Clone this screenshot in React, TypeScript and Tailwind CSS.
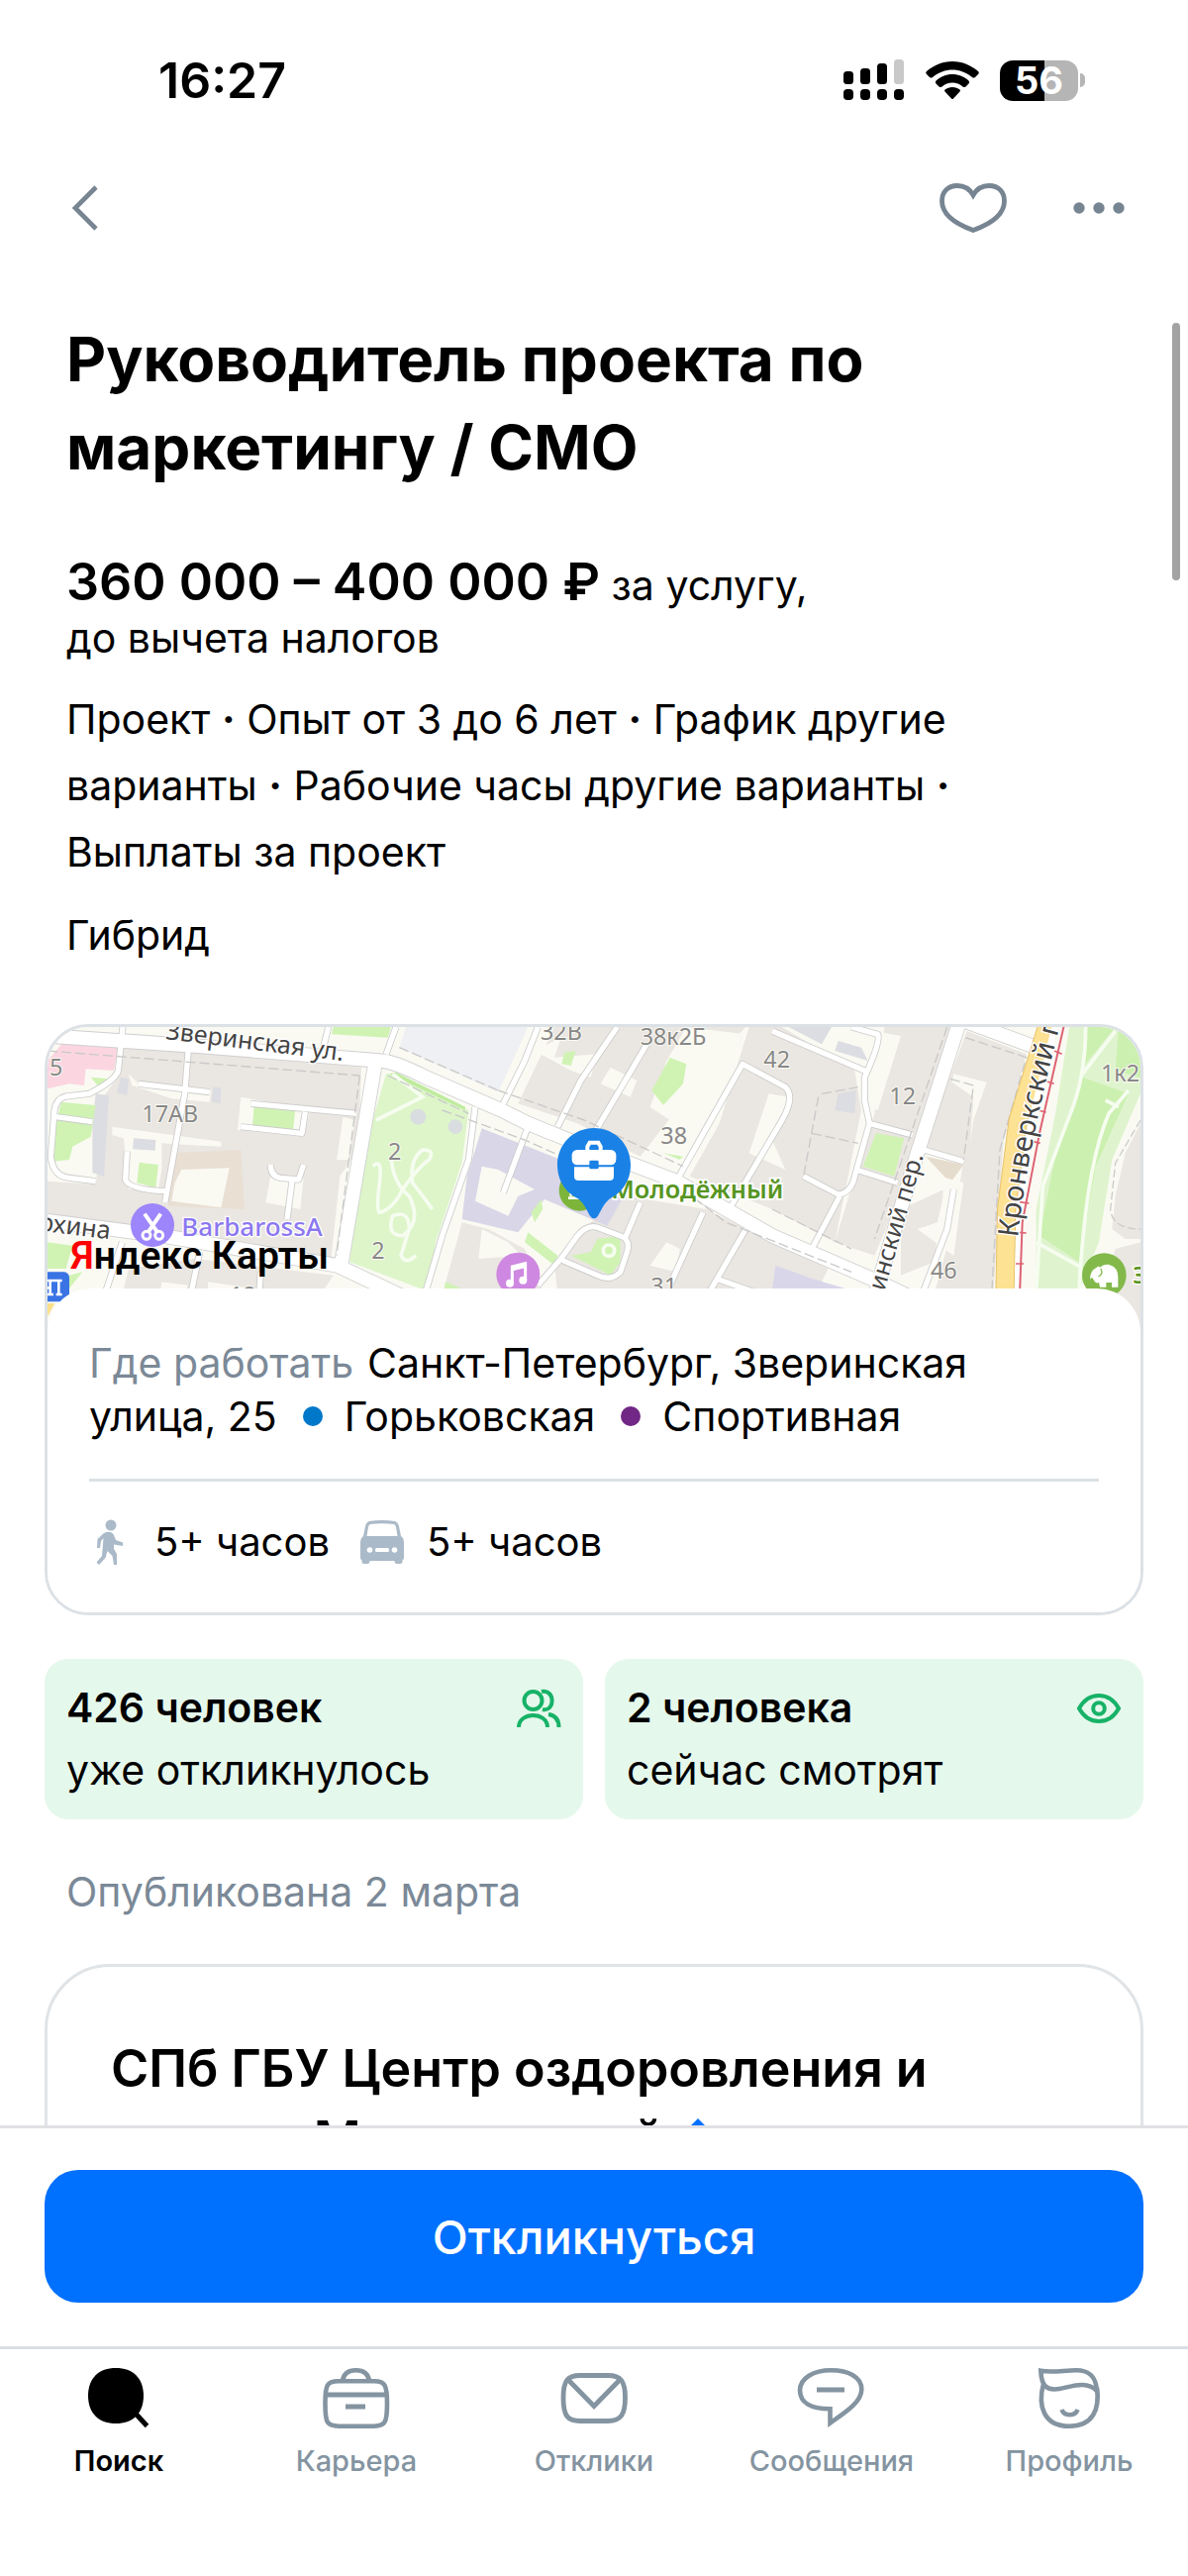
import React from "react";

const navItems = [
  { label: "Поиск", icon: <SearchIcon />, active: true },
  { label: "Карьера", icon: <BagIcon />, active: false },
  { label: "Отклики", icon: <MailIcon />, active: false },
  { label: "Сообщения", icon: <ChatIcon />, active: false },
  { label: "Профиль", icon: <FaceIcon />, active: false },
];

function SearchIcon() {
  return (
    <svg viewBox="0 0 72 64" className="h-16 w-[72px]" aria-hidden="true">
      <path d="M33 1C50 1 61 11 61 29S50 57 33 57 5 47 5 29 16 1 33 1Z" fill="currentColor" />
      <path d="M52 46L64.500 59.500" stroke="currentColor" strokeWidth="5" />
    </svg>
  );
}

function BagIcon() {
  return (
    <svg viewBox="0 0 72 64" className="h-16 w-[72px]" fill="none" stroke="currentColor" strokeWidth="4.600" aria-hidden="true">
      <path d="M22 14C23 7 28 3.300 35.500 3.300S48 7 49 14" />
      <path d="M4.500 37C4.500 18 6 14.300 18 14.300H54C65 14.300 67 18 67 37S65 59.700 54 59.700H18C6 59.700 4.500 56 4.500 37Z" />
      <path d="M5 28H67M25 40H45" strokeWidth="5" />
    </svg>
  );
}

function MailIcon() {
  return (
    <svg viewBox="0 0 72 64" className="h-16 w-[72px]" fill="none" stroke="currentColor" strokeWidth="4.800" aria-hidden="true">
      <path d="M5 31C5 14 9 8.500 22 8.500H50C63 8.500 67.500 14 67.500 31S63 54.500 50 54.500H22C9 54.500 5 49 5 31Z" />
      <path d="M10 13L36 39.500L62 13" />
    </svg>
  );
}

function ChatIcon() {
  return (
    <svg viewBox="0 0 72 64" className="h-16 w-[72px]" fill="none" stroke="currentColor" strokeWidth="4.600" aria-hidden="true">
      <path d="M34.500 42.300V56.500C48 47 66.300 36 66.300 22.500C66.300 10 53 3.300 35.500 3.300S4 11 4 23.500S15 42.300 34.500 42.300Z" />
      <path d="M21 23H49" strokeWidth="5" />
    </svg>
  );
}

function FaceIcon() {
  return (
    <svg viewBox="0 0 72 64" className="h-16 w-[72px]" fill="none" stroke="currentColor" strokeWidth="4.600" aria-hidden="true">
      <path d="M7.300 3.800C19 6 31 3.300 43 3.300C57 3.300 63 10 64 24C53 13 38 20 26 22C14 24 8 20 7.300 3.800Z" />
      <path d="M10 17C4 39 10 59.700 36 59.700C60 59.700 67 43 64 21" />
      <path d="M28.500 43C31 50 42 50 44.500 43" />
    </svg>
  );
}

function StatusBar() {
  return (
    <div className="flex items-center justify-between pt-[50px] pr-[104px] pl-[160px]">
      <time className="text-[50px] leading-[62px] font-semibold">16:27</time>
      <div className="flex items-center gap-[21px]">
        <svg viewBox="0 0 62 42" className="h-[42px] w-[62px]" aria-label="Сигнал">
          <rect x="0" y="12" width="10" height="13" rx="3.500" />
          <rect x="17" y="9" width="10" height="16" rx="3.500" />
          <rect x="34" y="4" width="10" height="21" rx="3.500" />
          <rect x="51" y="0" width="10" height="25" rx="3.500" fill="#c9c9c9" />
          <rect x="0" y="30" width="10" height="11" rx="4" />
          <rect x="17" y="30" width="10" height="11" rx="4" />
          <rect x="34" y="30" width="10" height="11" rx="4" />
          <rect x="51" y="30" width="10" height="11" rx="4" />
        </svg>
        <svg viewBox="0 0 54 40" className="h-10 w-[54px]" aria-label="Wi-Fi">
          <path d="M27 1C37 1 46 5 53 11Q54.500 12.500 53 14L50 17Q48.500 18 47 17C41 12 34 9.500 27 9.500S13 12 7 17Q5.500 18 4 17L1 14Q-.5 12.500 1 11C8 5 17 1 27 1Z" />
          <path d="M27 14C33.500 14 39 16.500 43.500 20.500Q45 22 43.500 23.500L40.500 26.500Q39 27.500 37.500 26.500C34.500 24 31 22.500 27 22.500S19.500 24 16.500 26.500Q15 27.500 13.500 26.500L10.500 23.500Q9 22 10.500 20.500C15 16.500 20.500 14 27 14Z" />
          <path d="M27 27C30 27 32.500 28 34.500 29.500Q35.500 30.500 34.500 31.500L28 38.500Q27 39.500 26 38.500L19.500 31.500Q18.500 30.500 19.500 29.500C21.500 28 24 27 27 27Z" />
        </svg>
        <div className="flex items-center gap-[2px]">
          <div className="flex h-[41px] w-[79px] items-center justify-center rounded-[13px] bg-linear-to-r from-black from-57% to-[#b5b5b5] to-57% text-[38px] leading-none font-bold text-white">
            56
          </div>
          <div className="h-[14px] w-[5px] rounded-r-full bg-[#b5b5b5]" />
        </div>
      </div>
    </div>
  );
}

function AppBar() {
  return (
    <div className="flex items-center justify-between pt-[58px] pr-[60px] pl-[66px] text-[#778592]">
      <button type="button" aria-label="Назад">
        <svg viewBox="0 0 40 80" className="h-20 w-10" fill="none" stroke="currentColor" strokeWidth="4.600" aria-hidden="true">
          <path d="M31 19L10 40L31 61" />
        </svg>
      </button>
      <div className="flex items-center gap-[61px]">
        <button type="button" aria-label="В избранное">
          <svg viewBox="0 0 72 80" className="h-20 w-[72px]" fill="none" stroke="currentColor" strokeWidth="4.800" aria-hidden="true">
            <path d="M36 27C32 20 26 17.500 20 17.500C10 17.500 4.500 24 4.500 33C4.500 46 18 56 36 62.500C54 56 67.500 46 67.500 33C67.500 24 62 17.500 52 17.500C46 17.500 40 20 36 27Z" />
          </svg>
        </button>
        <button type="button" aria-label="Ещё">
          <svg viewBox="0 0 60 80" className="h-20 w-[60px]" fill="currentColor" aria-hidden="true">
            <circle cx="10" cy="40" r="5.700" />
            <circle cx="30" cy="40" r="5.700" />
            <circle cx="50" cy="40" r="5.700" />
          </svg>
        </button>
      </div>
    </div>
  );
}

const pale = "#fafaf3";

function CityMap() {
  const streets = [
    "M54 75L500 105L1060 150Q1100 150 1200 200L1430 300L1510 340L1670 405L1960 515L2110 600L2250 680L2550 810L2720 890",
    "M1050 140L940 790",
    "M54 635L400 680L930 770L1270 930",
    "M2815 40L2690 430L2555 880",
    "M2780 10L3050 110",
  ];
  const lanes = [
    "M282 48L268 180Q260 210 180 250L110 258Q80 265 75 300L64 440Q70 500 120 505L200 515",
    "M80 320L190 335",
    "M482 100L470 250L410 580",
    "M330 220L545 245",
    "M670 280L990 310",
    "M835 305L825 370L640 350",
    "M295 425L290 510Q300 540 410 545",
    "M730 465Q730 500 760 505L815 510L830 465M795 515L780 630",
    "M905 48L890 110M1110 48L1080 130",
    "M515 730L490 850M700 790L695 860M280 700L230 850",
    "M1500 150L1435 280M1540 48L1500 150",
    "M1780 48L1670 210L1600 350",
    "M1870 100L1710 370",
    "M1510 350L1435 550",
    "M1350 290L1330 450L1250 680L1200 850",
    "M1965 505L2160 160L2290 230Q2320 260 2280 330L2120 600",
    "M1540 830L1610 750L1660 680Q1690 645 1720 655L1800 685Q1820 700 1810 730L1790 790Q1760 820 1720 800L1615 755",
    "M1805 685L1850 580M1940 830L2040 610M2170 660L2060 850M2080 810L2250 870",
    "M2250 60L2530 180M2490 48L2570 70Q2580 90 2530 200L2530 270L2545 340L2500 500Q2490 550 2450 555L2345 500M2455 560L2370 720",
    "M2545 340L2675 375M2505 480L2630 520",
    "M2710 420L2830 455M2800 540L2780 660L2700 870",
  ];
  return (
    <svg
      viewBox="54 48 3312 924"
      preserveAspectRatio="xMidYMin slice"
      className="block h-[308px] w-full"
      role="img"
      aria-label="Карта: Зверинская улица, 25"
    >
      <rect x="0" y="0" width="3400" height="1000" fill={pale} />
      {/* city blocks */}
      <g fill="#eae6e1">
        <path d="M285 95L1005 170L995 420L940 500L910 780L54 615V515L200 525L230 250L275 190Z" />
        <path d="M300 780L500 750L920 800L880 860H280Z" />
        <path d="M1590 48H2170L2100 120L1850 440L1660 340L1480 280Z" />
        <path d="M2180 48H2280L2500 180L2520 300L2480 500L2440 700L2250 600L2000 500L2090 340Z" />
        <path d="M2380 200L2480 230L2490 430L2460 520L2360 490L2370 350Z" />
        <path d="M2590 48H2790L2670 430L2620 600L2560 740L2440 700L2500 500L2560 310Z" />
        <path d="M2840 60L3020 130L2950 400L2920 860H2740L2800 640L2830 450L2710 410Z" />
        <path d="M1810 560L2050 600L2420 780L2380 860H1820L1600 860L1590 760L1700 640Z" />
        <path d="M1310 640L1390 660L1500 720L1560 860H1250Z" />
        <path d="M3366 340L3320 430L3290 560L3280 660L3320 690L3366 690Z" />
        <path d="M3290 720L3366 700V966H3180L3240 850Z" />
        <path d="M2640 600L2770 540L2740 760L2640 800Z" />
      </g>
      <path d="M430 430L640 420L650 600L420 590Z" fill="#e9dfd3" />
      <path d="M2715 440L2830 465L2790 520Z" fill="#e5dccd" />
      <g fill="#dcdde2">
        <path d="M200 250L240 255L225 500L190 490L190 340Z" />
        <path d="M275 200L300 205L295 255L265 248ZM555 230L580 232L578 280L552 275Z" />
        <path d="M2300 48H2430L2400 100ZM2450 90L2520 110L2540 150L2440 120ZM2450 250L2505 240L2500 310L2440 300Z" />
      </g>
      <g fill="#eff0f3">
        <path d="M1140 48H1510L1420 245L1120 110Z" />
      </g>
      {/* courtyards */}
      <g fill={pale}>
        <path d="M300 190L340 230L550 240L545 275L430 265L310 225Z" />
        <path d="M250 350L580 395V410L480 405L400 400L400 480L390 540L300 540L285 385L250 375Z" />
        <path d="M460 480L605 475L580 595L430 575L440 520Z" />
        <path d="M640 260L850 300L830 380L630 360Z" />
        <path d="M730 500L830 505L820 600L715 580Z" />
        <path d="M950 320L985 330L965 450L930 450Z" />
        <path d="M400 820L480 830L470 850L395 850ZM540 820L680 840H540Z" />
        <path d="M1530 120L1610 80L1590 140L1720 130L1700 200L1640 180ZM1760 170L1840 210L1820 260L1730 220Z" />
        <path d="M1930 150L1990 48L2170 70L2000 370L1880 290Z" />
        <path d="M2180 430L2240 250L2300 260L2250 390L2290 480Z" />
        <path d="M1560 570L1690 600L1640 700L1580 760L1510 680ZM1370 660L1450 700L1490 740L1360 750ZM1930 700L1970 720L1960 790L1880 770Z" />
        <path d="M2560 60L2640 75L2570 300L2540 290ZM2800 190L2900 215L2860 330L2850 400L2860 260L2795 215ZM2760 500L2830 520L2800 740L2690 660L2750 640L2770 560Z" />
      </g>
      <path d="M315 385L382 390L380 422L312 418Z" fill="#dcdde2" />
      {/* clinic, school and other marked plots */}
      <path d="M54 150L130 60L275 85L255 180L170 175L165 225L120 220L54 235Z" fill="#fbd6e1" />
      <path d="M1370 355L1610 450L1800 560L1750 650L1560 570L1480 670L1310 630L1325 500Z" fill="#d9d6e7" />
      <path d="M1370 470L1420 480L1530 540L1480 560L1450 620L1350 575Z" fill={pale} />
      <path d="M2260 770L2370 810L2490 845H2250Z" fill="#d9d6ea" />
      {/* greenery */}
      <g fill="#d0f3b4">
        <path d="M95 275L200 285L185 380L130 410L120 450L70 455L80 340Z" />
        <path d="M680 285L805 295L798 362L675 345ZM332 458L390 465L382 535L325 520ZM185 200L240 205L210 230Z" />
        <path d="M920 48H1095L1085 80L915 70ZM54 700L130 710L110 780H54ZM120 800L160 790L120 840Z" />
        <path d="M1620 125L1655 120L1640 165L1612 160ZM1940 140L1990 160L1980 220L1920 285L1885 240Z" />
        <path d="M1520 610L1550 570L1555 600L1530 640ZM1510 670L1600 740L1590 770L1500 700ZM1720 690L1790 680L1790 760L1760 800L1640 740L1700 730ZM1260 820L1320 845H1255Z" />
        <path d="M2565 370L2650 385L2620 500L2525 470ZM1920 430L1980 440L1970 450Z" />
      </g>
      <path d="M1080 190L1110 190L1330 300L1310 460L1230 700L1210 850L970 760L1010 430Z" fill="#ddf5c9" />
      <path d="M1090 190L1110 185L1320 290V300Z" fill="#bfeb9e" />
      <path d="M3150 48H3366V250L3280 450L3240 700L3180 845H3050V600L3110 300Z" fill="#dff4ce" />
      <path d="M3200 48H3290L3190 170ZM3300 48L3366 90V200L3290 180ZM3190 200L3330 250L3230 470L3180 760L3060 680L3110 430Z" fill="#ccf0b0" />
      <g fill="#d9dde0">
        <circle cx="1177" cy="320" r="24" />
        <circle cx="1290" cy="350" r="22" />
      </g>
      {/* park paths */}
      <g fill="none" stroke="#f6fdf0" strokeWidth="11">
        <path d="M1100 190L1190 260L1050 330" />
        <path d="M1040 470Q1070 440 1060 520T1060 610Q1100 600 1130 540Q1180 470 1210 450Q1230 420 1190 420Q1150 450 1160 520Q1200 570 1220 600M1095 440Q1100 520 1150 560Q1190 640 1130 680Q1080 680 1100 620Q1150 600 1150 660L1125 740Q1140 770 1170 740" />
        <path d="M3200 48Q3200 200 3150 320L3070 530L3050 845M3290 60L3190 190M3330 240L3270 310Q3200 470 3180 845M3050 700L3185 775M3260 270L3300 290" />
        <circle cx="1755" cy="725" r="17" />
      </g>
      {/* roadways */}
      <g fill="none" strokeLinejoin="round">
        {streets.map((d) => (
          <path key={d} d={d} stroke="#cfcfd0" strokeWidth="46" />
        ))}
        {lanes.map((d) => (
          <path key={d} d={d} stroke="#cbcbcb" strokeWidth="21" />
        ))}
        {lanes.map((d) => (
          <path key={d} d={d} stroke="#ffffff" strokeWidth="16" />
        ))}
        {streets.map((d) => (
          <path key={d} d={d} stroke="#ffffff" strokeWidth="41" />
        ))}
        <path
          d="M54 120L1000 195M1000 195L930 740M1085 195L1330 310M1250 300L1500 390L1700 480M1420 240L1680 330L1980 470M1120 110L1420 240M1980 540L2110 640L2490 790M2250 600L2490 720M2780 48L2650 430L2560 690M2835 80L3020 140L2940 420L2915 860M2400 250L2510 230M2390 260L2345 500M2370 370L2510 400M2790 205L2860 225L2830 450"
          stroke="#c9c9c9"
          strokeWidth="4"
          strokeDasharray="30 12"
        />
        <path d="M3366 330L3290 460L3275 600Q3280 660 3366 660" stroke="#cbcbcb" strokeWidth="4" strokeDasharray="24 10" />
        <path d="M3085 40L2995 330L2960 600L2955 860" stroke="#e9c36c" strokeWidth="58" />
        <path d="M3085 40L2995 330L2960 600L2955 860" stroke="#fde293" strokeWidth="52" />
        <path d="M3108 40L3035 330L3000 600L2993 860" stroke="#ffffff" strokeWidth="18" />
        <path d="M3135 40L3060 370L3008 640L3000 860" stroke="#dd6272" strokeWidth="6" />
        <path d="M3105 120L3128 130M3080 212L3104 220M3055 300L3080 306M3030 392L3062 400M3000 578L3028 582M2995 670L3020 672M2988 765L3012 765" stroke="#dd6272" strokeWidth="5" />
      </g>
      {/* house numbers */}
      <g fill="#888888" fontFamily='"Noto Sans", sans-serif' fontSize="70" stroke={pale} strokeWidth="6" paintOrder="stroke">
        <text x="60" y="194">5</text>
        <text x="340" y="336">17АВ</text>
        <text x="1086" y="449">2</text>
        <text x="1036" y="751">2</text>
        <text x="606" y="886">18</text>
        <text x="1548" y="86">32В</text>
        <text x="1850" y="102">38к2Б</text>
        <text x="2224" y="170">42</text>
        <text x="1912" y="402">38</text>
        <text x="1882" y="858">31</text>
        <text x="2605" y="281">12</text>
        <text x="2730" y="809">46</text>
        <text x="3246" y="214">1к2</text>
      </g>
      {/* street names */}
      <g fill="#444444" fontFamily='"Noto Sans", sans-serif' stroke="#ffffff" strokeWidth="8" paintOrder="stroke">
        <text x="410" y="84" fontSize="75" transform="rotate(7 410 84)">Зверинская ул.</text>
        <text x="24" y="664" fontSize="76" transform="rotate(7 24 664)">рхина</text>
        <text x="2590" y="850" fontSize="74" transform="rotate(-74 2590 850)">инский пер.</text>
        <path id="kronverk" d="M2994 686Q3028 380 3150 -60" fill="none" stroke="none" />
        <text fontSize="86">
          <textPath href="#kronverk">Кронверкский п</textPath>
        </text>
      </g>
      {/* places */}
      <circle cx="372" cy="648" r="66" fill="#9d85fb" />
      <g fill="none" stroke="#ffffff" strokeWidth="9">
        <circle cx="354" cy="679" r="12" />
        <circle cx="392" cy="679" r="12" />
        <path d="M348 614L386 668M397 614L360 668" strokeWidth="12" />
      </g>
      <text x="460" y="680" fontFamily='"Noto Sans", sans-serif' fontWeight="500" fontSize="78" fill="#8c78f0" stroke="#ffffff" strokeWidth="8" paintOrder="stroke">
        BarbarossA
      </text>
      <circle cx="1480" cy="797" r="66" fill="#ce88e1" />
      <path d="M1462 824V775L1502 766V815" fill="none" stroke="#ffffff" strokeWidth="9" />
      <path d="M1458 770L1506 758V776L1458 788Z" fill="#ffffff" />
      <circle cx="1455" cy="824" r="12" fill="#ffffff" />
      <circle cx="1495" cy="815" r="12" fill="#ffffff" />
      <circle cx="1666" cy="543" r="62" fill="#7db53b" />
      <path d="M1632 566H1680M1640 560V540" stroke="#ffffff" strokeWidth="8" />
      <text x="1762" y="567" fontFamily='"Noto Sans", sans-serif' fontWeight="600" fontSize="76" fill="#579522" stroke="#ffffff" strokeWidth="10" paintOrder="stroke">
        Молодёжный
      </text>
      <circle cx="3256" cy="800" r="67" fill="#83b94b" />
      <path d="M3243 776C3254 766 3270 764 3280 772C3293 778 3298 790 3298 808V836H3279V822H3262V836H3243L3240 822Q3231 826 3227 818L3219 806L3214 812C3212 797 3221 782 3231 778C3236 772 3241 772 3243 776Z" fill="#ffffff" />
      <path d="M3246 780Q3254 798 3238 804" fill="none" stroke="#83b94b" strokeWidth="4" />
      <text x="3343" y="826" fontFamily='"Noto Sans", sans-serif' fontWeight="600" fontSize="72" fill="#579522" stroke="#ffffff" strokeWidth="8" paintOrder="stroke">
        З
      </text>
      <rect x="20" y="790" width="100" height="90" rx="16" fill="#3a74e4" />
      <path d="M54 816H98M62 818V858M88 818V858M54 858H72M80 858H98M54 838H64" stroke="#ffffff" strokeWidth="8" />
      <path d="M54 885H76L54 925Z" fill="#fbe08b" />
      {/* vacancy pin */}
      <path d="M1710 354C1772 354 1821 403 1821 465C1821 520 1790 552 1758 568C1738 585 1732 604 1722 620Q1710 636 1698 620C1688 604 1682 585 1662 568C1630 552 1599 520 1599 465C1599 403 1648 354 1710 354Z" fill="#1a82e6" />
      <rect x="1643" y="420" width="134" height="46" rx="16" fill="#ffffff" />
      <path d="M1650 472H1770V500Q1770 513 1757 513H1663Q1650 513 1650 500Z" fill="#ffffff" />
      <path d="M1690 420V410L1697 398H1723L1730 410V420" fill="none" stroke="#ffffff" strokeWidth="12" />
      <rect x="1696" y="452" width="28" height="26" rx="4" fill="#1a82e6" />
      <text x="124" y="781" fontFamily="Roboto, sans-serif" fontWeight="600" fontSize="117" fill="#000000">
        <tspan fill="#ff0000">Я</tspan>ндекс Карты
      </text>
    </svg>
  );
}

function WalkIcon() {
  return (
    <svg viewBox="0 0 44 48" className="h-12 w-11" fill="#abbac8" aria-hidden="true">
      <circle cx="22" cy="7" r="5.500" />
      <path d="M15 15Q21 12 24.500 16L27 22L34 24.500V28L25 26.500V31L28 36V47H25L23.500 38L18.500 33L16.500 40L10 47L7.500 44.500L13 38L14.500 20L12 23L11 30H8L8.500 21Z" />
    </svg>
  );
}

function CarIcon() {
  return (
    <svg viewBox="0 0 46 48" className="h-12 w-[46px]" aria-hidden="true">
      <path d="M10 3Q23 1 36 3Q39 4 40 8L42 18Q45 20 45 25V40Q45 42 43.500 42V44Q43.500 46 41 46H38Q35.500 46 35.500 43H10.500Q10.500 46 8 46H5Q2.500 46 2.500 44V42Q1 42 1 40V25Q1 20 4 18L6 8Q7 4 10 3ZM11 6Q9.500 6.500 9 9L7.500 18H38.500L37 9Q36.500 6.500 35 6Q23 4.500 11 6Z" fill="#abbac8" fillRule="evenodd" />
      <circle cx="10.500" cy="32" r="2.800" fill="#ffffff" />
      <circle cx="35.500" cy="32" r="2.800" fill="#ffffff" />
      <rect x="16" y="30" width="14" height="4" rx="1.500" fill="#ffffff" />
    </svg>
  );
}

function PlaceCard() {
  return (
    <section className="mt-14 overflow-hidden rounded-[44px] border-[3px] border-[#dce1e6]">
      <CityMap />
      <div className="relative -mt-11 rounded-t-[44px] bg-white px-[42px] pt-12 pb-11">
        <p className="max-w-[960px] text-[41px] leading-[54px]">
          <span className="mr-[14px] text-[#7b8997]">Где работать</span>
          Санкт-Петербург, Зверинская улица, 25
          <span className="mr-[22px] mb-[5px] ml-[26px] inline-block size-5 rounded-full bg-[#0078c9]" />
          Горьковская
          <span className="mr-[22px] mb-[5px] ml-[26px] inline-block size-5 rounded-full bg-[#702785]" />
          Спортивная
        </p>
        <hr className="mt-9 border-t-[3px] border-[#dce1e4]" />
        <div className="mt-[34px] flex items-center text-[40px] leading-[54px]">
          <WalkIcon />
          <span className="ml-[22px]">5+ часов</span>
          <span className="ml-[30px] flex items-center gap-[22px]">
            <CarIcon />
            5+ часов
          </span>
        </div>
      </div>
    </section>
  );
}

function PeopleIcon() {
  return (
    <svg viewBox="0 0 46 40" className="h-10 w-[46px]" fill="none" stroke="#17b267" strokeWidth="4" aria-hidden="true">
      <circle cx="17.500" cy="12" r="9" />
      <path d="M26 3C40 0 40 24 27 21M3 39C3 23 32 23 32 39M33 26C40 27 43.500 31 43.500 39" />
    </svg>
  );
}

function EyeIcon() {
  return (
    <svg viewBox="0 0 46 40" className="h-10 w-[46px]" fill="none" stroke="#17b267" strokeWidth="4" aria-hidden="true">
      <path d="M3 20C8 11 15 7 23 7S38 11 43 20C38 29 31 33 23 33S8 29 3 20Z" />
      <circle cx="23" cy="20" r="5.800" />
    </svg>
  );
}

function Stat({ value, note, icon }: { value: string; note: string; icon: React.ReactNode }) {
  return (
    <div className="flex items-start justify-between rounded-3xl bg-[#e5f8ec] py-[18px] pr-[22px] pl-[22px]">
      <p className="text-[41px] leading-[63px]">
        <strong className="block font-semibold">{value}</strong>
        {note}
      </p>
      <span className="mt-3">{icon}</span>
    </div>
  );
}

function Dot() {
  return <span className="font-bold">·</span>;
}

export default function App() {
  return (
    <div className="flex h-screen flex-col bg-white font-['Inter',sans-serif] text-black">
      <header className="shrink-0">
        <StatusBar />
        <AppBar />
      </header>

      <main className="relative min-h-0 flex-1 overflow-hidden px-[45px] pt-[68px]">
        <div className="absolute top-[76px] right-2 h-[260px] w-2 rounded-full bg-[#a3a3a3]" />
        <div className="px-[22px]">
          <h1 className="max-w-[900px] text-[62px] leading-[89px] font-bold">Руководитель проекта по маркетингу / СМО</h1>
          <p className="mt-[65px] text-[41px] leading-[53px]">
            <strong className="text-[52px] font-semibold">360 000 – 400 000 ₽</strong> за услугу,
            <br />
            до вычета налогов
          </p>
          <p className="mt-[22px] max-w-[930px] text-[41px] leading-[67px]">
            Проект <Dot /> Опыт от 3 до 6 лет <Dot /> График другие варианты <Dot /> Рабочие часы другие варианты <Dot /> Выплаты за
            проект
          </p>
          <p className="mt-[17px] text-[41px] leading-[67px]">Гибрид</p>
        </div>

        <PlaceCard />

        <div className="mt-11 grid grid-cols-2 gap-[22px]">
          <Stat value="426 человек" note="уже откликнулось" icon={<PeopleIcon />} />
          <Stat value="2 человека" note="сейчас смотрят" icon={<EyeIcon />} />
        </div>

        <p className="mt-[46px] px-[22px] text-[41px] leading-[54px] text-[#7b8997]">Опубликована 2 марта</p>

        <section className="mt-[46px] h-[600px] rounded-[66px] border-[3px] border-[#e0e4e7] px-16 pt-[67px]">
          <h2 className="max-w-[900px] text-[52px] leading-[72px] font-semibold">
            СПб ГБУ Центр оздоровления и отдыха Молодежный
            <svg viewBox="0 0 44 44" className="mb-2 ml-3 inline-block size-11" aria-label="Проверенная компания">
              <path d="M22 0L29 7H37V15L44 22L37 29V37H29L22 44L15 37H7V29L0 22L7 15V7H15Z" fill="#0070ff" />
              <path d="M13 22L20 29L32 17" fill="none" stroke="#ffffff" strokeWidth="4" />
            </svg>
          </h2>
        </section>
      </main>

      <footer className="shrink-0 bg-white">
        <div className="border-t-[3px] border-[#dfe1e4] px-[45px] pt-[42px] pb-11">
          <button type="button" className="h-[134px] w-full rounded-[34px] bg-[#0070ff] text-[47px] leading-none font-medium text-white">
            Откликнуться
          </button>
        </div>
        <nav className="grid grid-cols-5 border-t-[3px] border-[#d9dfe4] pt-[18px] pb-24">
          {navItems.map((item) => (
            <a
              key={item.label}
              href="#"
              aria-current={item.active ? "page" : undefined}
              className={
                item.active
                  ? "flex flex-col items-center gap-[11px] text-[29px] leading-10 font-semibold text-black"
                  : "flex flex-col items-center gap-[11px] text-[29px] leading-10 font-medium text-[#8494a1]"
              }
            >
              {item.icon}
              {item.label}
            </a>
          ))}
        </nav>
      </footer>
    </div>
  );
}
